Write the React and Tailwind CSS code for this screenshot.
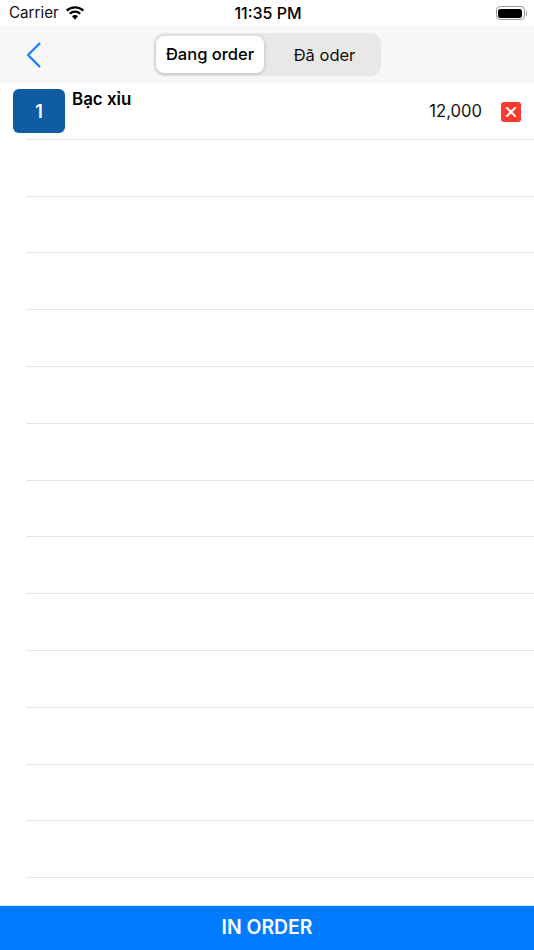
import React from "react";

const emptyRows = Array.from({ length: 13 });

function Wifi() {
  return (
    <svg width="20" height="15" viewBox="0 0 20 15" fill="#000">
      <path d="M10 2.4c2.9 0 5.5 1.1 7.5 3l1.6-1.6A13 13 0 0 0 10 .2 13 13 0 0 0 .9 3.8l1.6 1.6a10.8 10.8 0 0 1 7.5-3z" />
      <path d="M10 6.8c1.7 0 3.2.7 4.4 1.8l1.6-1.6A8.6 8.6 0 0 0 10 4.6 8.6 8.6 0 0 0 4 7l1.6 1.6A6.3 6.3 0 0 1 10 6.8z" />
      <path d="M10 9c-1.2 0-2.2.4-3 1.2l3 3.6 3-3.6A4.4 4.4 0 0 0 10 9z" />
    </svg>
  );
}

function Battery() {
  return (
    <div className="flex items-center">
      <div className="w-[29px] h-[14px] rounded-[4px] border border-[#9a9a9a] p-[1.5px]">
        <div className="w-full h-full rounded-[2.5px] bg-black" />
      </div>
      <div className="w-[1.5px] h-[5px] ml-[1px] rounded-r-sm bg-[#9a9a9a]" />
    </div>
  );
}

export default function App() {
  return (
    <div className="w-[534px] h-[950px] flex flex-col bg-white overflow-hidden font-['Inter','Liberation_Sans',sans-serif] text-black">
      <div className="h-[26px] shrink-0 grid grid-cols-3 items-center pl-[9px] pr-[7px]">
        <div className="flex items-center gap-[6px]">
          <span className="text-[15.2px] leading-[26px] text-[#111]">Carrier</span>
          <Wifi />
        </div>
        <div className="text-center text-[16px] font-medium leading-[26px] whitespace-nowrap">11:35 PM</div>
        <div className="flex justify-end">
          <Battery />
        </div>
      </div>

      <div className="h-[57px] shrink-0 bg-[#f7f7f7] flex items-center">
        <svg className="ml-[26px]" width="16" height="26" viewBox="0 0 16 26" fill="none" stroke="#0a7aff" strokeWidth="2" strokeLinecap="round" strokeLinejoin="round">
          <path d="M13.5 1.5 2 13l11.5 11.5" />
        </svg>
        <div className="ml-[112px] w-[227px] h-[43px] rounded-[10px] bg-[#e8e8e8] flex items-center p-[2px]">
          <div className="w-[108px] h-[37px] rounded-[8px] bg-white shadow-[0_1px_4px_rgba(0,0,0,0.2)] flex items-center justify-center text-[16.5px] font-medium">
            Đang order
          </div>
          <div className="flex-1 flex items-center justify-center text-[16.5px] text-[#111] pl-[6px] pt-[1px]">Đã oder</div>
        </div>
      </div>

      <div className="flex-1 min-h-0">
        <div className="h-[56.8px] flex relative">
          <div className="ml-[13px] mt-[6px] w-[52px] h-[44px] rounded-[6px] bg-[#0f5ca3] flex items-center justify-center text-white text-[18px] font-semibold">
            1
          </div>
          <div className="ml-[7px] mt-[6px] text-[16.9px] font-semibold leading-[21px]">Bạc xỉu</div>
          <div className="ml-auto mt-[17px] text-[16.6px] leading-[22px] text-[#111]">12,000</div>
          <div className="ml-[19px] mr-[13px] mt-[19px] w-[20px] h-[20px] rounded-[3px] bg-[#ff3b30] flex items-center justify-center">
            <svg width="10" height="10" viewBox="0 0 10 10" stroke="#fff" strokeWidth="2" strokeLinecap="round">
              <path d="M1 1l8 8M9 1l-8 8" />
            </svg>
          </div>
          <div className="absolute left-[26px] right-0 bottom-0 border-b border-[#e4e4e4]" />
        </div>
        {emptyRows.map((_, i) => (
          <div key={i} className="h-[56.8px] ml-[26px] border-b border-[#e4e4e4]" />
        ))}
      </div>

      <div className="h-[45px] shrink-0 bg-[#007aff] flex items-center justify-center text-white text-[19.4px] font-semibold border-t border-[#e4e4e4]">
        IN ORDER
      </div>
    </div>
  );
}
